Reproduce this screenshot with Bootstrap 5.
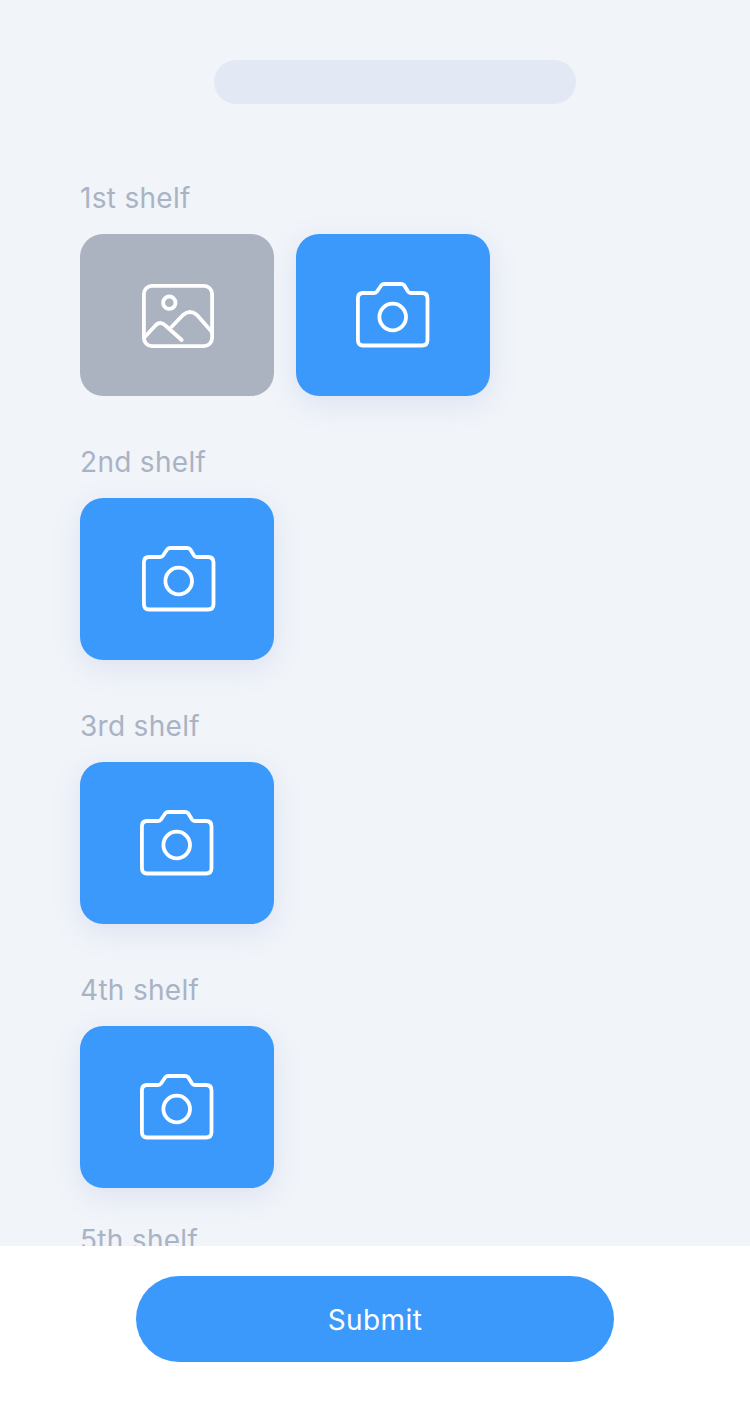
<!DOCTYPE html>
<html lang="en">
<head>
    <meta charset="UTF-8">
    <meta name="viewport" content="width=device-width, initial-scale=1.0">
    <title>Shelves</title>
    <link rel="stylesheet" href="https://cdn.jsdelivr.net/npm/bootstrap@5.3.0/dist/css/bootstrap.min.css">
    <style>
        html, body { height: 100%; }
        body { font-family: "Inter", "Liberation Sans", sans-serif; background: #fff; }
        .screen { height: 100vh; }
        .shelves { background: #f1f4f9; padding: 60px 80px 0; min-height: 0; }
        .title-pill { width: 362px; height: 44px; margin-left: 134px; border-radius: 22px; background: #e2e8f4; }
        .shelf-first { margin-top: 80px; }
        .shelf-group { height: 264px; }
        .shelf-last { margin-top: -14px; }
        .shelf-label { font-size: 28px; line-height: 28px; height: 50px; color: #a9b3c4; letter-spacing: .3px; }
        .tile-row { gap: 22px; }
        .photo-tile { width: 194px; height: 162px; border: 0; border-radius: 23px; padding: 0; color: #fff; }
        .tile-photo { background: #acb3c0; }
        .tile-camera { background: #3b99fc; box-shadow: 0 8px 28px rgba(120, 145, 210, .17); }
        .tile-icon { fill: none; stroke: currentColor; stroke-width: 3.8; stroke-linecap: round; stroke-linejoin: round; }
        .nudge { margin-left: 3px; }
        .nudge-photo { margin: 2px 0 0 2px; }
        .bottom-bar { height: 166px; padding-top: 30px; }
        .submit-btn { width: 478px; height: 86px; padding-top: 8px; border-radius: 43px; background: #3b99fc; border: 0; color: #fff; font-size: 28px; letter-spacing: .4px; }
    </style>
</head>
<body>
    <div class="screen d-flex flex-column">
        <main class="shelves flex-grow-1 overflow-hidden">
            <div class="title-pill"></div>

            <div class="shelf-group shelf-first">
                <div class="shelf-label">1st shelf</div>
                <div class="d-flex tile-row">
                    <button class="photo-tile tile-photo d-flex align-items-center justify-content-center" type="button">
                        <svg class="tile-icon nudge-photo" width="72" height="64" viewBox="0 0 72 64">
                            <rect x="1.900" y="1.900" width="68.200" height="60.200" rx="8"/>
                            <circle cx="27.300" cy="18.700" r="6.200"/>
                            <path d="M3 52.700 L13 42 Q18 36 24 42 L39.700 56"/>
                            <path d="M29.700 42.700 L41 31 Q48 25 55 31 L69.700 47.700"/>
                        </svg>
                    </button>
                    <button class="photo-tile tile-camera d-flex align-items-center justify-content-center" type="button">
                        <svg class="tile-icon" width="74" height="66" viewBox="0 0 74 66">
                            <path id="cam" d="M7 11 H18 Q20 11 21 9.500 L25.500 3 Q26.500 2 28 2 H45 Q47 2 48 3 L52 9.500 Q53 11 55 11 H66 Q71.500 11 71.500 16.500 V58 Q71.500 63.500 66 63.500 H7 Q1.900 63.500 1.900 58 V16.500 Q1.900 11 7 11 Z"/>
                            <circle cx="36.700" cy="35" r="13.300"/>
                        </svg>
                    </button>
                </div>
            </div>

            <div class="shelf-group">
                <div class="shelf-label">2nd shelf</div>
                <button class="photo-tile tile-camera d-flex align-items-center justify-content-center" type="button">
                    <svg class="tile-icon nudge" width="74" height="66" viewBox="0 0 74 66">
                        <use href="#cam"/>
                        <circle cx="36.700" cy="35" r="13.300"/>
                    </svg>
                </button>
            </div>

            <div class="shelf-group">
                <div class="shelf-label">3rd shelf</div>
                <button class="photo-tile tile-camera d-flex align-items-center justify-content-center" type="button">
                    <svg class="tile-icon" width="74" height="66" viewBox="0 0 74 66">
                        <use href="#cam"/>
                        <circle cx="36.700" cy="35" r="13.300"/>
                    </svg>
                </button>
            </div>

            <div class="shelf-group">
                <div class="shelf-label">4th shelf</div>
                <button class="photo-tile tile-camera d-flex align-items-center justify-content-center" type="button">
                    <svg class="tile-icon" width="74" height="66" viewBox="0 0 74 66">
                        <use href="#cam"/>
                        <circle cx="36.700" cy="35" r="13.300"/>
                    </svg>
                </button>
            </div>

            <div class="shelf-group shelf-last">
                <div class="shelf-label">5th shelf</div>
            </div>
        </main>

        <footer class="bottom-bar bg-white d-flex justify-content-center flex-shrink-0">
            <button class="btn submit-btn" type="button">Submit</button>
        </footer>
    </div>

    <script src="https://cdn.jsdelivr.net/npm/bootstrap@5.3.0/dist/js/bootstrap.bundle.min.js"></script>
</body>
</html>
